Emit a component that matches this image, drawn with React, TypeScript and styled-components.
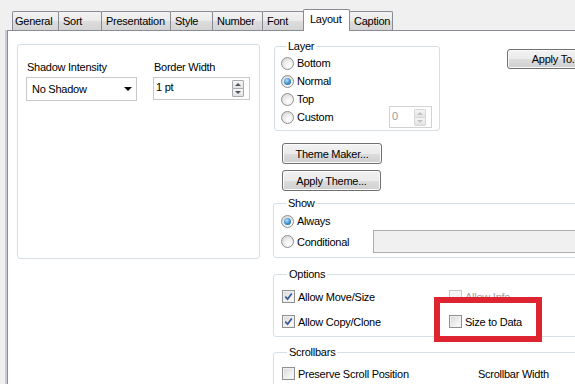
import styled, { createGlobalStyle } from "styled-components";

const GlobalStyle = createGlobalStyle`
  html, body {
    margin: 0;
    padding: 0;
    background: #f0f0f0;
  }

  body {
    font-family: "Liberation Sans", Arial, sans-serif;
    font-size: 11px;
    color: #000;
  }
`;

const Dialog = styled.div`
  width: 575px;
  height: 384px;
  box-sizing: border-box;
  overflow: hidden;
  padding-top: 9px;
  display: flex;
  flex-direction: column;
  background: #f0f0f0;
  letter-spacing: -0.25px;
`;

const TabStrip = styled.div`
  display: flex;
  align-items: flex-end;
  height: 22px;
  margin: 0 0 -1px 12px;
  position: relative;
  z-index: 1;
`;

const Tab = styled.div<{ $w: number; $active?: boolean }>`
  width: ${({ $w }) => $w}px;
  box-sizing: border-box;
  height: ${({ $active }) => ($active ? 22 : 19)}px;
  margin-bottom: ${({ $active }) => ($active ? 0 : 1)}px;
  margin-left: -1px;
  padding-left: ${({ $active }) => ($active ? 6 : 4)}px;
  line-height: ${({ $active }) => ($active ? 19 : 18)}px;
  white-space: nowrap;
  border: 1px solid #898c95;
  border-bottom: none;
  border-radius: 2px 2px 0 0;
  background: ${({ $active }) =>
    $active ? "#fff" : "linear-gradient(#f3f3f3, #ebebeb 50%, #dddddd 51%, #d4d4d4)"};
  position: relative;
  z-index: ${({ $active }) => ($active ? 2 : 1)};

  &:first-child {
    margin-left: 0;
    padding-left: 2px;
  }
`;

const TabPanel = styled.div`
  flex: 1;
  width: 660px;
  margin-left: 7px;
  padding: 9px 0 0 9px;
  display: flex;
  align-items: flex-start;
  gap: 13px;
  background: #fff;
  border-top: 1px solid #898c95;
  border-left: 1px solid #898c95;
  box-shadow: -2px 0 0 #c9ccd3;
`;

const PlainGroup = styled.div`
  width: 243px;
  height: 215px;
  box-sizing: border-box;
  margin-top: 4px;
  padding: 16px 0 0 8px;
  border: 1px solid #d5dfe5;
  border-radius: 3px;
  display: flex;
  gap: 16px;
`;

const Field = styled.div`
  display: flex;
  flex-direction: column;
  gap: 3px;
`;

const FieldLabel = styled.div`
  line-height: 13px;
  margin-left: 1px;
`;

const Combo = styled.div`
  width: 111px;
  height: 24px;
  box-sizing: border-box;
  padding: 0 4px 0 5px;
  display: flex;
  align-items: center;
  border: 1px solid #c9c9c9;
  background: #fff;
`;

const ComboArrow = styled.span`
  margin-left: auto;
  width: 0;
  height: 0;
  border-left: 4px solid transparent;
  border-right: 4px solid transparent;
  border-top: 4px solid #000;
`;

const SpinEdit = styled.div<{ $w: number; $h: number; $disabled?: boolean }>`
  width: ${({ $w }) => $w}px;
  height: ${({ $h }) => $h}px;
  box-sizing: border-box;
  padding: 2px 5px 0 2px;
  display: flex;
  align-items: flex-start;
  line-height: 13px;
  border: 1px solid ${({ $disabled }) => ($disabled ? "#d2d2d2" : "#c9c9c9")};
  background: #fff;
  color: ${({ $disabled }) => ($disabled ? "#9a9a9a" : "#000")};
`;

const SpinValue = styled.span`
  flex: 1;
  padding-top: 1px;
`;

const SpinButtons = styled.div`
  display: flex;
  flex-direction: column;
`;

const SpinButton = styled.div<{ $dir: "up" | "down"; $disabled?: boolean }>`
  width: 12px;
  height: 9px;
  box-sizing: border-box;
  display: flex;
  align-items: center;
  justify-content: center;
  border: 1px solid ${({ $disabled }) => ($disabled ? "#d6d6d6" : "#a7abb0")};
  margin-top: ${({ $dir }) => ($dir === "down" ? -1 : 0)}px;
  border-radius: 1px;
  background: linear-gradient(#f6f6f6, #e3e3e3);

  &::after {
    content: "";
    border-left: 3px solid transparent;
    border-right: 3px solid transparent;
    ${({ $dir, $disabled }) =>
      $dir === "up"
        ? `border-bottom: 3px solid ${$disabled ? "#c2c2c2" : "#4e5561"};`
        : `border-top: 3px solid ${$disabled ? "#c2c2c2" : "#4e5561"};`}
  }
`;

const RightColumn = styled.div`
  width: 360px;
  display: flex;
  flex-direction: column;
`;

const TopRow = styled.div`
  display: flex;
  align-items: flex-start;
`;

const Group = styled.fieldset<{ $w?: number; $indent?: number; $mt?: number; $pad: string }>`
  margin: ${({ $mt }) => $mt ?? 0}px 0 0 ${({ $indent }) => $indent ?? 0}px;
  width: ${({ $w }) => ($w ? `${$w}px` : "auto")};
  box-sizing: border-box;
  min-width: 0;
  padding: ${({ $pad }) => $pad};
  border: 1px solid #d5dfe5;
  border-radius: 3px;
`;

const Legend = styled.legend`
  margin-left: 5px;
  padding: 0 2px;
  line-height: 13px;
`;

const OptionRow = styled.div<{ $h?: number }>`
  height: ${({ $h }) => $h ?? 18}px;
  display: flex;
  align-items: center;
  white-space: nowrap;
`;

const Choice = styled.label<{ $disabled?: boolean }>`
  display: flex;
  align-items: center;
  gap: 3px;
  color: ${({ $disabled }) => ($disabled ? "#a3a3a3" : "#000")};
`;

const Radio = styled.span<{ $checked?: boolean }>`
  width: 13px;
  height: 13px;
  box-sizing: border-box;
  border-radius: 50%;
  border: 1px solid #8f9090;
  display: flex;
  align-items: center;
  justify-content: center;
  background: radial-gradient(circle at 62% 68%, #ffffff 0, #f2f2f2 35%, #cdcdcd 100%);

  &::after {
    content: "";
    display: ${({ $checked }) => ($checked ? "block" : "none")};
    width: 7px;
    height: 7px;
    border-radius: 50%;
    background: radial-gradient(circle at 40% 35%, #b8e2fb 0, #4b9bd6 45%, #1b4d78 100%);
  }
`;

const Box = styled.span<{ $disabled?: boolean }>`
  width: 13px;
  height: 13px;
  box-sizing: border-box;
  border: 1px solid ${({ $disabled }) => ($disabled ? "#c6c6c6" : "#8f9090")};
  display: flex;
  align-items: center;
  justify-content: center;
  background: ${({ $disabled }) =>
    $disabled ? "#f4f4f4" : "linear-gradient(135deg, #d6d6d6, #f4f4f4 70%, #fbfbfb)"};
  box-shadow: inset 0 0 0 1px ${({ $disabled }) => ($disabled ? "#f7f7f7" : "#f0f0f0")};
`;

const Button = styled.button<{ $w: number; $h: number; $mt?: number; $ml?: number }>`
  width: ${({ $w }) => $w}px;
  height: ${({ $h }) => $h}px;
  flex-shrink: 0;
  margin: ${({ $mt }) => $mt ?? 0}px 0 0 ${({ $ml }) => $ml ?? 0}px;
  padding: 0;
  font: inherit;
  letter-spacing: inherit;
  color: #000;
  border: 1px solid #707070;
  border-radius: 3px;
  background: linear-gradient(#f2f2f2, #ebebeb 50%, #dddddd 51%, #cfcfcf);
  box-shadow: inset 0 0 0 1px #fbfbfb;
`;

const Condition = styled.div`
  width: 260px;
  height: 23px;
  box-sizing: border-box;
  border: 1px solid #adadad;
  background: #f0f0f0;
`;

const ConditionLabel = styled.div`
  width: 93px;
`;

const OptionGrid = styled.div<{ $cols: string }>`
  position: relative;
  display: grid;
  grid-template-columns: ${({ $cols }) => $cols};
  row-gap: 6px;
`;

const Highlight = styled.div`
  position: absolute;
  left: 152px;
  top: 10px;
  width: 108px;
  height: 45px;
  box-sizing: border-box;
  border: 6px solid #dd2430;
`;

const Check = () => (
  <svg width="9" height="9" viewBox="0 0 9 9">
    <path d="M1.3 4.6 L3.6 7.1 L7.8 1.4" fill="none" stroke="#3e5a96" strokeWidth="1.7" />
  </svg>
);

const CheckItem = ({ label, checked, disabled }: { label: string; checked?: boolean; disabled?: boolean }) => (
  <OptionRow $h={19}>
    <Choice $disabled={disabled}>
      <Box $disabled={disabled}>{checked && <Check />}</Box>
      {label}
    </Choice>
  </OptionRow>
);

const tabs = [
  { name: "General", w: 47 },
  { name: "Sort", w: 44 },
  { name: "Presentation", w: 70 },
  { name: "Style", w: 43 },
  { name: "Number", w: 51 },
  { name: "Font", w: 42 },
  { name: "Layout", w: 47, active: true },
  { name: "Caption", w: 44 },
];

const layers = ["Bottom", "Normal", "Top"];

const App = () => {
  return (
    <>
      <GlobalStyle />
      <Dialog>
        <TabStrip>
          {tabs.map((tab) => (
            <Tab key={tab.name} $w={tab.w} $active={tab.active}>
              {tab.name}
            </Tab>
          ))}
        </TabStrip>
        <TabPanel>
          <PlainGroup>
            <Field>
              <FieldLabel>Shadow Intensity</FieldLabel>
              <Combo>
                No Shadow
                <ComboArrow />
              </Combo>
            </Field>
            <Field>
              <FieldLabel>Border Width</FieldLabel>
              <SpinEdit $w={97} $h={23}>
                <SpinValue>1 pt</SpinValue>
                <SpinButtons>
                  <SpinButton $dir="up" />
                  <SpinButton $dir="down" />
                </SpinButtons>
              </SpinEdit>
            </Field>
          </PlainGroup>

          <RightColumn>
            <TopRow>
              <Group $w={166} $indent={1} $pad="1px 0 4px 6px">
                <Legend>Layer</Legend>
                {layers.map((name) => (
                  <OptionRow key={name}>
                    <Choice>
                      <Radio $checked={name === "Normal"} />
                      {name}
                    </Choice>
                  </OptionRow>
                ))}
                <OptionRow>
                  <Choice>
                    <Radio />
                    Custom
                  </Choice>
                  <SpinEdit $w={43} $h={22} $disabled style={{ marginLeft: "auto", marginRight: 7 }}>
                    <SpinValue>0</SpinValue>
                    <SpinButtons>
                      <SpinButton $dir="up" $disabled />
                      <SpinButton $dir="down" $disabled />
                    </SpinButtons>
                  </SpinEdit>
                </OptionRow>
              </Group>
              <Button $w={98} $h={20} $mt={9} $ml={67}>
                Apply To...
              </Button>
            </TopRow>

            <Button $w={100} $h={21} $mt={12} $ml={9}>
              Theme Maker...
            </Button>
            <Button $w={99} $h={21} $mt={6} $ml={9}>
              Apply Theme...
            </Button>

            <Group $mt={6} $pad="2px 0 4px 7px">
              <Legend>Show</Legend>
              <OptionRow>
                <Choice>
                  <Radio $checked />
                  Always
                </Choice>
              </OptionRow>
              <OptionRow $h={23}>
                <ConditionLabel>
                  <Choice>
                    <Radio />
                    Conditional
                  </Choice>
                </ConditionLabel>
                <Condition />
              </OptionRow>
            </Group>

            <Group $mt={10} $pad="6px 0 5px 8px">
              <Legend>Options</Legend>
              <OptionGrid $cols="167px 1fr">
                <CheckItem label="Allow Move/Size" checked />
                <CheckItem label="Allow Info" disabled />
                <CheckItem label="Allow Copy/Clone" checked />
                <CheckItem label="Size to Data" />
                <Highlight />
              </OptionGrid>
            </Group>

            <Group $mt={9} $pad="5px 0 20px 8px">
              <Legend>Scrollbars</Legend>
              <OptionGrid $cols="196px 1fr">
                <CheckItem label="Preserve Scroll Position" />
                <OptionRow $h={19}>Scrollbar Width</OptionRow>
              </OptionGrid>
            </Group>
          </RightColumn>
        </TabPanel>
      </Dialog>
    </>
  );
};

export default App;
